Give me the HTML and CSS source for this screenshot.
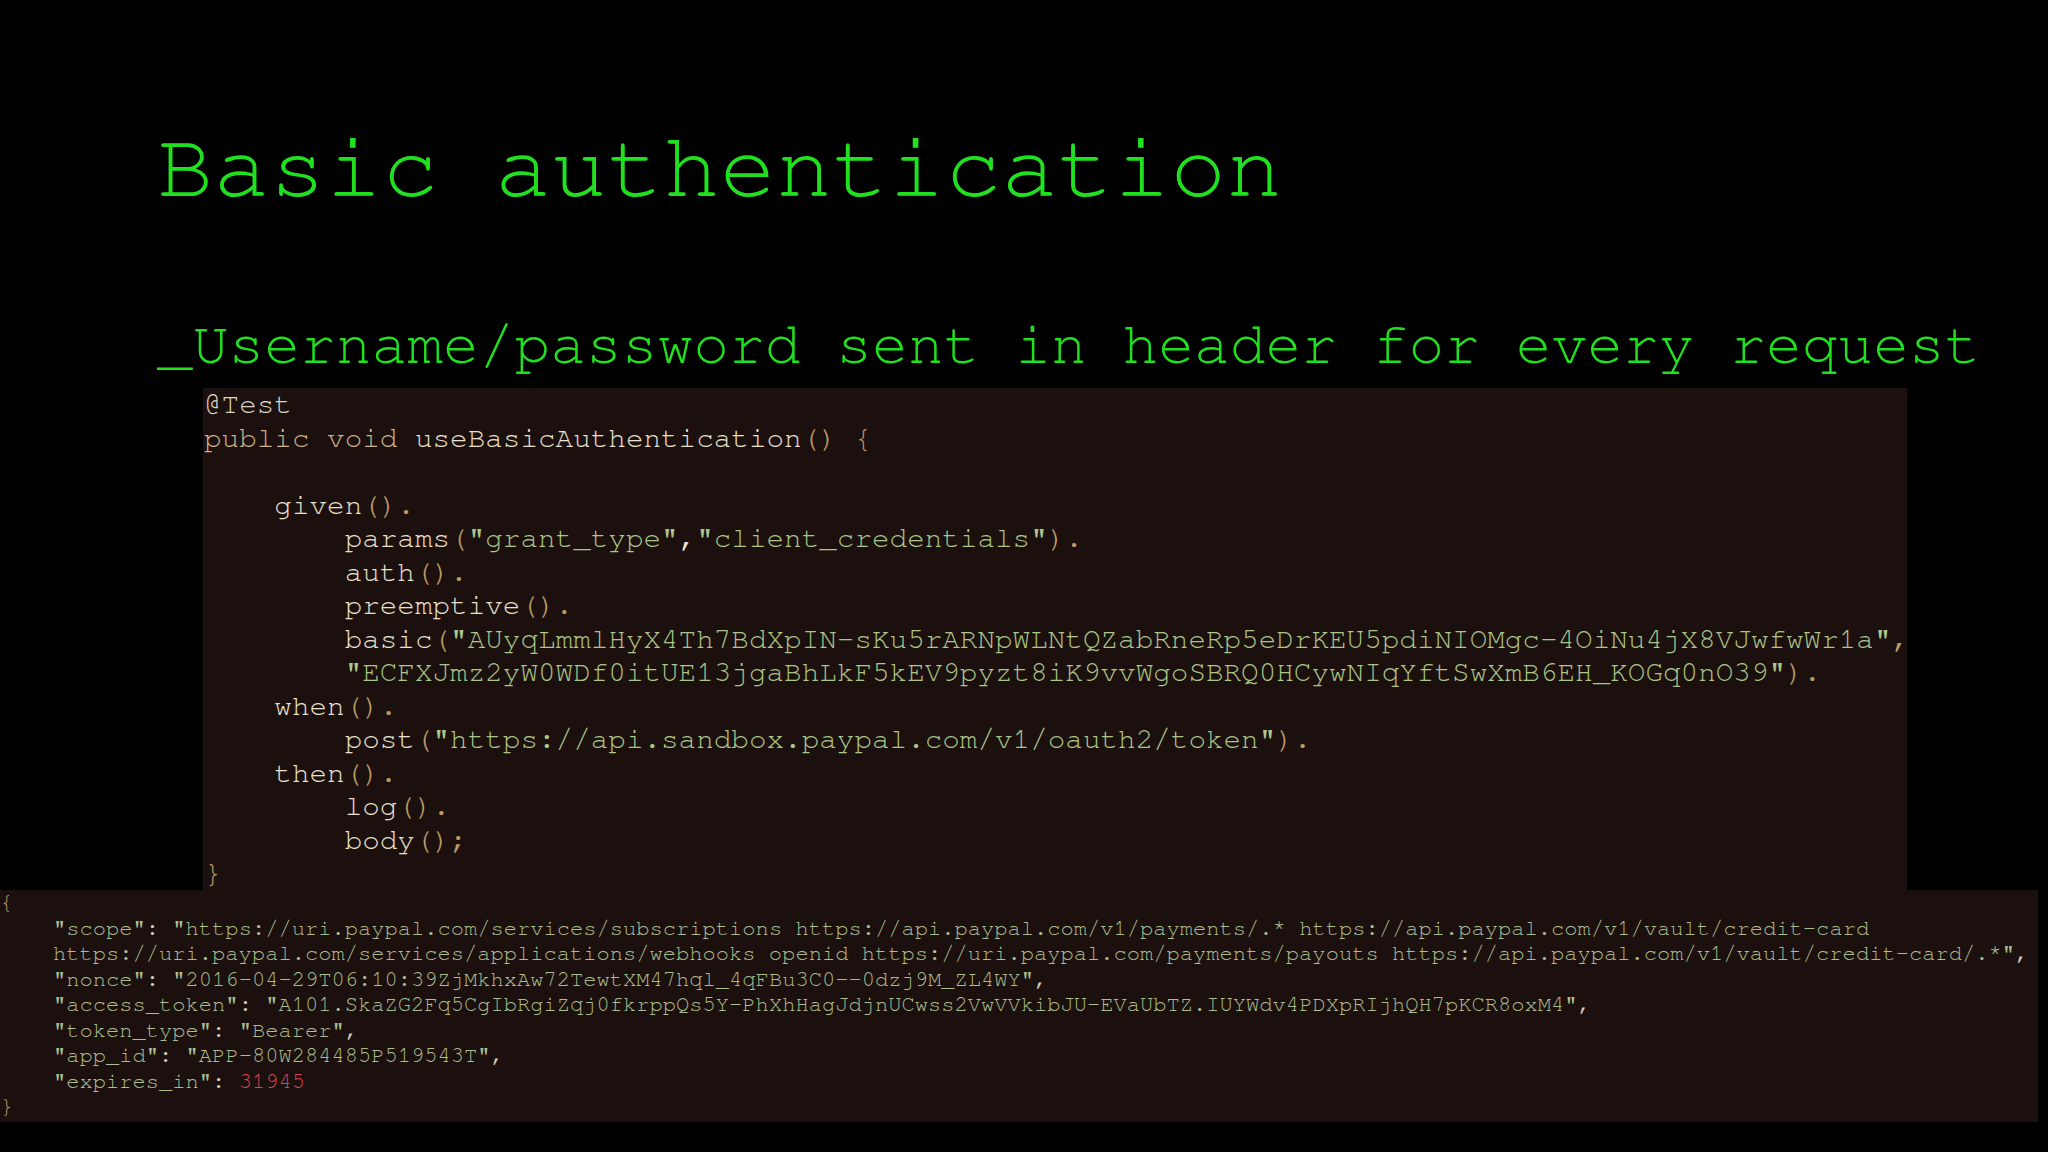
FILE: index.html
```html
<!DOCTYPE html>
<html lang="en">
<head>
  <meta charset="UTF-8" />
  <meta name="viewport" content="width=device-width, initial-scale=1.0" />
  <title>Basic authentication</title>
  <link rel="stylesheet" href="styles.css">
</head>
<body>
  <div class="heading">
    <h1 class="title">Basic authentication</h1>
    <p class="subtitle">_Username/password sent in header for every request</p>
  </div>

  <pre class="code"><span class="ann">@Test</span>
<span class="kw">public void</span> useBasicAuthentication<span class="p">() {</span>

    given<span class="p">().</span>
        params<span class="p">(</span><span class="str">"grant_type"</span>,<span class="str">"client_credentials"</span><span class="p">).</span>
        auth<span class="p">().</span>
        preemptive<span class="p">().</span>
        basic<span class="p">(</span><span class="str">"AUyqLmmlHyX4Th7BdXpIN-sKu5rARNpWLNtQZabRneRp5eDrKEU5pdiNIOMgc-4OiNu4jX8VJwfwWr1a"</span><span class="p">,</span>
        <span class="str">"ECFXJmz2yW0WDf0itUE13jgaBhLkF5kEV9pyzt8iK9vvWgoSBRQ0HCywNIqYftSwXmB6EH_KOGq0nO39"</span><span class="p">).</span>
    when<span class="p">().</span>
        post<span class="p">(</span><span class="str">"https://api.sandbox.paypal.com/v1/oauth2/token"</span><span class="p">).</span>
    then<span class="p">().</span>
        log<span class="p">().</span>
        body<span class="p">();</span>
<span class="p">}</span></pre>

  <pre class="json"><span class="p">{</span>
    <span class="str">"scope"</span>: <span class="str">"https://uri.paypal.com/services/subscriptions https://api.paypal.com/v1/payments/.* https://api.paypal.com/v1/vault/credit-card</span>
<span class="str">    https://uri.paypal.com/services/applications/webhooks openid https://uri.paypal.com/payments/payouts https://api.paypal.com/v1/vault/credit-card/.*"</span>,
    <span class="str">"nonce"</span>: <span class="str">"2016-04-29T06:10:39ZjMkhxAw72TewtXM47hql_4qFBu3C0--0dzj9M_ZL4WY"</span>,
    <span class="str">"access_token"</span>: <span class="str">"A101.SkaZG2Fq5CgIbRgiZqj0fkrppQs5Y-PhXhHagJdjnUCwss2VwVVkibJU-EVaUbTZ.IUYWdv4PDXpRIjhQH7pKCR8oxM4"</span>,
    <span class="str">"token_type"</span>: <span class="str">"Bearer"</span>,
    <span class="str">"app_id"</span>: <span class="str">"APP-80W284485P519543T"</span>,
    <span class="str">"expires_in"</span>: <span class="num">31945</span>
<span class="p">}</span></pre>
</body>
</html>
```

FILE: styles.css
```css
body {
  background-color: #000000;
  margin: 0;
  padding: 0;
  font-family: 'Nimbus Mono PS', 'FreeMono', 'Liberation Mono', monospace;
}

.heading {
  padding: 122px 0 0 157px;
}

.title {
  margin: 0;
  font-size: 93.8px;
  line-height: 93px;
  font-weight: normal;
  color: #20e020;
}

.subtitle {
  margin: 100px 0 0;
  font-size: 59.6px;
  line-height: 60px;
  color: #20e020;
  white-space: nowrap;
}

.code {
  margin: 13px 0 0 203px;
  width: 1704px;
  height: 502px;
  padding: 0 0 0 1px;
  box-sizing: border-box;
  background-color: #1b100d;
  color: #ebe1cf;
  font-family: 'Nimbus Mono PS', 'FreeMono', 'Liberation Mono', monospace;
  font-size: 29.3px;
  line-height: 33.5px;
  overflow: visible;
}

.code .ann {
  color: #ddd6c8;
}

.code .kw {
  color: #cfb489;
}

.code .p {
  color: #bd9a62;
}

.code .str {
  color: #abc78a;
}

.json {
  margin: 0;
  width: 2038px;
  height: 232px;
  padding: 0;
  box-sizing: border-box;
  background-color: #1b100d;
  color: #d4cbb9;
  font-family: 'Nimbus Mono PS', 'FreeMono', 'Liberation Mono', monospace;
  font-size: 22.1px;
  line-height: 25.5px;
}

.json .p {
  color: #bd9a62;
}

.json .str {
  color: #adbf92;
}

.json .num {
  color: #d8465a;
}
```
